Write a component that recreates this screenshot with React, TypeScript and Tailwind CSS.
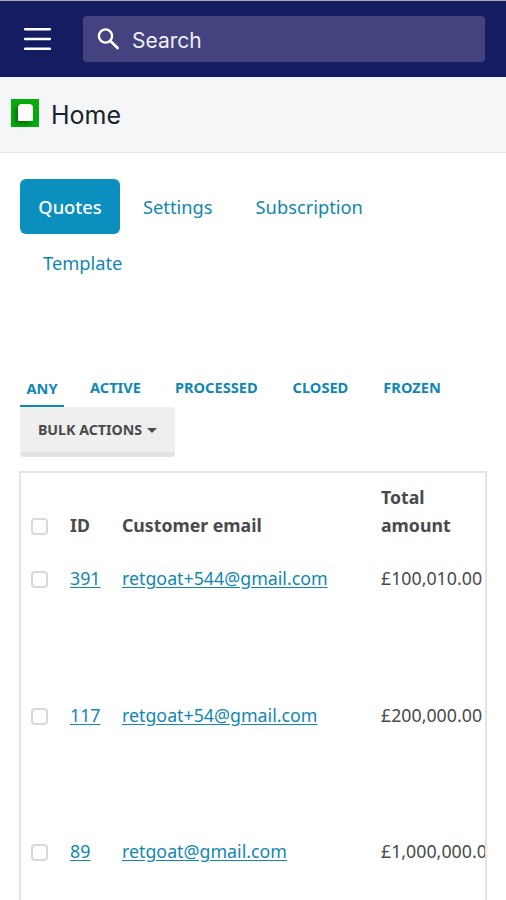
import React from "react";

const rows = [
  { id: "391", email: "retgoat+544@gmail.com", total: "£100,010.00" },
  { id: "117", email: "retgoat+54@gmail.com", total: "£200,000.00" },
  { id: "89", email: "retgoat@gmail.com", total: "£1,000,000.00" },
];

function Box() {
  return <div className="w-[17px] h-[17px] rounded-[4px] border-2 border-[#d9d9d9] bg-white shrink-0" />;
}

export default function App() {
  return (
    <div className="w-[506px] h-[900px] overflow-hidden bg-white font-['Noto_Sans',sans-serif] text-[#4a4a4a]">
      <div className="h-[1px] bg-[#a9a9b5]" />
      <header className="h-[76px] bg-[#161c61] flex items-center pl-6 pr-[21px]">
        <svg width="27" height="22" viewBox="0 0 27 22" className="shrink-0" aria-hidden="true">
          <path d="M1 1.3h25M1 11h25M1 20.7h25" stroke="#fff" strokeWidth="2.4" strokeLinecap="round" />
        </svg>
        <div className="ml-[32px] flex-1 h-[46px] rounded-[4px] bg-[#44437f] flex items-center pl-[13px]">
          <svg width="24" height="24" viewBox="0 0 24 24" aria-hidden="true" className="shrink-0">
            <circle cx="9.5" cy="9" r="6.6" fill="none" stroke="#fff" strokeWidth="2.4" />
            <path d="M14.4 14L21.6 21" stroke="#fff" strokeWidth="2.6" strokeLinecap="round" />
          </svg>
          <span className="ml-[12px] text-[21px] leading-[30px] pt-[3px] text-[#eeeef6] font-['Inter',sans-serif]">Search</span>
        </div>
      </header>
      <div className="h-[76px] bg-[#f4f6f8] border-b border-[#e6e8ea] flex items-center pl-[11px]">
        <div className="w-[28px] h-[28px] mb-[4px] bg-[#06ab0c] flex items-center justify-center">
          <div className="w-[15px] h-[17px] bg-white rounded-t-[4px] rounded-b-[1px] shadow-[-3px_3px_4px_rgba(0,70,0,0.55)]" />
        </div>
        <span className="ml-[12px] text-[25px] pt-[3px] text-[#19232d] font-['Inter',sans-serif]">Home</span>
      </div>

      <nav className="pl-5 pt-[26px] flex flex-wrap w-[400px] text-[18.3px] text-[#0f87b3]">
        <a className="w-[100px] h-[55px] rounded-[6px] bg-[#0a8fbe] text-white flex items-center justify-center font-medium">Quotes</a>
        <a className="h-[55px] ml-[23px] flex items-center">Settings</a>
        <a className="h-[55px] ml-[43px] flex items-center">Subscription</a>
        <a className="h-[55px] ml-[23px] flex items-center pt-[2px]">Template</a>
      </nav>

      <div className="pl-5 mt-[85px] flex items-start h-[33px] text-[14.6px] font-bold text-[#0f87b3]">
        <a className="w-[44px] h-[33px] border-b-[2px] border-[#0f87b3] flex items-center justify-center pb-[2px]">ANY</a>
        <a className="ml-[26px] h-[27px] flex items-center">ACTIVE</a>
        <a className="ml-[34px] h-[27px] flex items-center">PROCESSED</a>
        <a className="ml-[35px] h-[27px] flex items-center">CLOSED</a>
        <a className="ml-[35px] h-[27px] flex items-center">FROZEN</a>
      </div>

      <div className="ml-5 w-[155px] h-[50px] pt-[1px] rounded-[4px] bg-[#efefef] border-b-[5px] border-[#e2e2e2] flex items-center justify-center gap-[5px] text-[14.2px] font-bold text-[#4a4a4a]">
        BULK ACTIONS
        <span className="w-0 h-0 border-x-[5px] border-x-transparent border-t-[5px] border-t-[#4a4a4a]" />
      </div>

      <div className="ml-[19px] mt-[14px] w-[468px] h-[600px] border-2 border-b-0 border-[#e4e4e4] overflow-hidden">
        <div className="flex items-end h-[68px] text-[17.7px] font-bold leading-[28px] pb-[2px] whitespace-nowrap">
          <div className="w-[49px] shrink-0 pl-[10px] pb-[4px]"><Box /></div>
          <div className="w-[52px] shrink-0">ID</div>
          <div className="w-[259px] shrink-0">Customer email</div>
          <div className="shrink-0">Total<br />amount</div>
        </div>
        {rows.map((r) => (
          <div key={r.id} className="flex h-[136.5px] pt-[23px] text-[17.8px] leading-[28px] whitespace-nowrap items-start">
            <div className="w-[49px] shrink-0 pl-[10px] pt-[7px]"><Box /></div>
            <a className="w-[52px] shrink-0 text-[#0f87b3] underline underline-offset-2">{r.id}</a>
            <a className="w-[259px] shrink-0 text-[#0f87b3] underline underline-offset-2">{r.email}</a>
            <div className="shrink-0">{r.total}</div>
          </div>
        ))}
      </div>
    </div>
  );
}
